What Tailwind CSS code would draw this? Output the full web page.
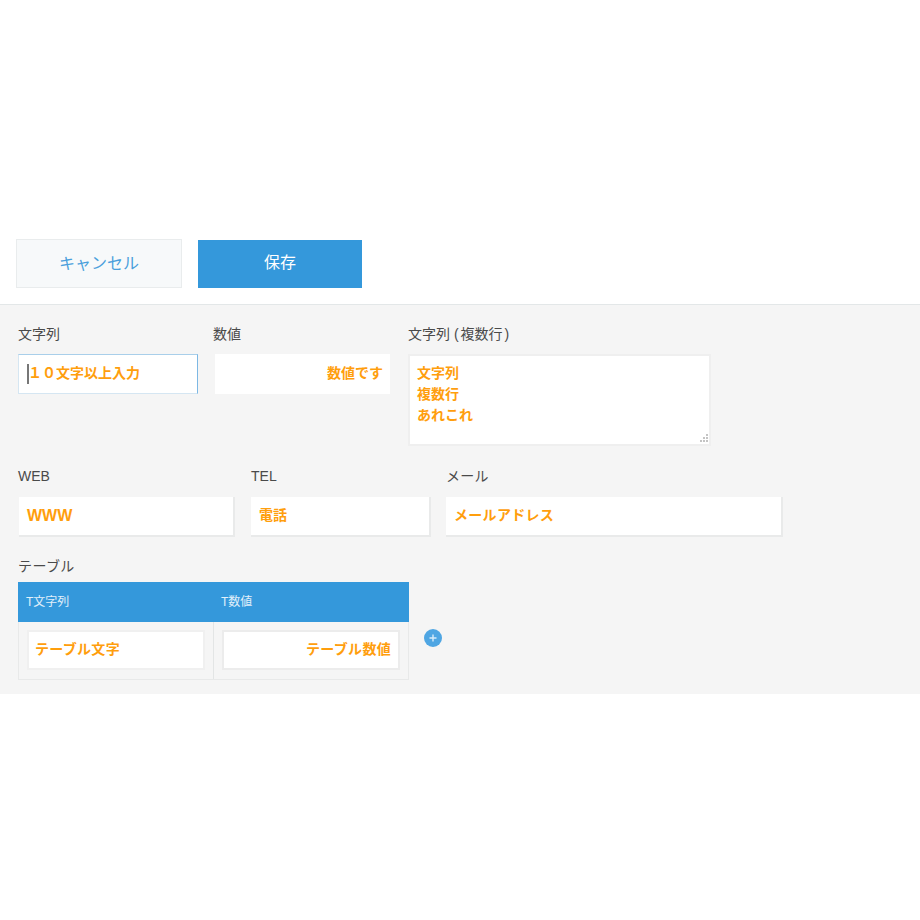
<!DOCTYPE html>
<html lang="ja">
<head>
  <meta charset="UTF-8" />
  <title>レコード編集</title>
  <script src="https://cdn.jsdelivr.net/npm/@tailwindcss/browser@4"></script>
</head>
<body class="bg-white font-['Liberation_Sans','Noto_Sans_CJK_JP',sans-serif] text-[14px] text-[#4a4a4a]">
  <!-- toolbar -->
  <div class="h-[305px] border-b border-[#e3e7e8] pt-[239px] pl-4 flex gap-4 items-start">
    <button class="w-[166px] h-[49px] bg-[#f7f9fa] border border-[#e9eced] text-[#4a9fdc] text-[16px]">キャンセル</button>
    <button class="w-[164px] h-[48px] pb-[3px] mt-px bg-[#3498db] text-white text-[16px]">保存</button>
  </div>

  <!-- form -->
  <div class="h-[389px] bg-[#f5f5f5] pl-[18px] pt-[19px]">
    <div class="flex items-start h-[142px]">
      <div class="w-[195px]">
        <div class="h-[20px] leading-[20px] mb-[10px]">文字列</div>
        <div class="w-[180px] h-[40px] pb-px bg-white border border-[#d5e6f2] border-r-[#7db8e4] border-t-[#a9cfea] pl-2 flex items-center font-bold text-[#ff9e0d]">
          <span class="w-[2px] h-[20px] mt-px bg-[#777] -mr-px"></span>
          <span>１０文字以上入力</span>
        </div>
      </div>
      <div class="w-[195px]">
        <div class="h-[20px] leading-[20px] mb-[10px]">数値</div>
        <div class="ml-[2px] w-[175px] h-[40px] pb-px bg-white pr-[7px] flex items-center justify-end font-bold text-[#ff9e0d]">数値です</div>
      </div>
      <div>
        <div class="h-[20px] leading-[20px] mb-[10px]">文字列 (<span class="mx-[2px]">複数行</span>)</div>
        <div class="relative w-[303px] h-[92px] bg-white border-2 border-[#efefef] pl-[7px] pt-[7px] font-bold text-[#ff9e0d] leading-[21px]">
          <div>文字列</div>
          <div>複数行</div>
          <div>あれこれ</div>
          <svg class="absolute right-0 bottom-0" width="12" height="12" viewBox="0 0 12 12" fill="#c4c4c4">
            <rect x="9" y="2" width="2" height="2" />
            <rect x="6" y="5" width="2" height="2" />
            <rect x="9" y="5" width="2" height="2" />
            <rect x="3" y="8" width="2" height="2" />
            <rect x="6" y="8" width="2" height="2" />
            <rect x="9" y="8" width="2" height="2" />
          </svg>
        </div>
      </div>
    </div>

    <div class="flex items-start h-[80px]">
      <div class="w-[233px]">
        <div class="h-[20px] leading-[20px] mb-[11px]">WEB</div>
        <div class="ml-px w-[216px] h-[40px] pb-px bg-white border-r-2 border-b-2 border-[#e9eaea] pl-2 flex items-center font-bold text-[16px] text-[#ff9e0d]">WWW</div>
      </div>
      <div class="w-[195px]">
        <div class="h-[20px] leading-[20px] mb-[11px]">TEL</div>
        <div class="w-[180px] h-[40px] pb-px bg-white border-r-2 border-b-2 border-[#e9eaea] pl-2 flex items-center font-bold text-[#ff9e0d]">電話</div>
      </div>
      <div>
        <div class="h-[20px] leading-[20px] mb-[11px] tracking-[0.3px]">メール</div>
        <div class="w-[337px] h-[40px] pb-px bg-white border-r-2 border-b-2 border-[#e9eaea] pl-2 flex items-center font-bold tracking-[0.3px] text-[#ff9e0d]">メールアドレス</div>
      </div>
    </div>

    <div class="h-[20px] leading-[20px] mt-[10px] mb-[6px] tracking-[0.4px]">テーブル</div>
    <div class="flex items-start">
      <div class="w-[391px]">
        <div class="h-[40px] bg-[#3498db] text-white/85 text-[12px] flex items-center">
          <div class="w-[195px] pl-2">T文字列</div>
          <div class="pl-[8px]">T数値</div>
        </div>
        <div class="flex h-[58px] border border-t-0 border-[#e8e9e9]">
          <div class="w-[195px] pl-[8px] pt-[8px] border-r border-[#e3e5e5]">
            <div class="w-[178px] h-[40px] pb-px bg-white border-2 border-[#f0f0f0] pl-[6px] flex items-center font-bold tracking-[0.3px] text-[#ff9e0d]">テーブル文字</div>
          </div>
          <div class="pl-[8px] pt-[8px]">
            <div class="w-[178px] h-[40px] pb-px bg-white border-2 border-[#ececec] pr-[7px] flex items-center justify-end font-bold tracking-[0.3px] text-[#ff9e0d]">テーブル数値</div>
          </div>
        </div>
      </div>
      <button class="ml-[15px] mt-[47px] w-[18px] h-[18px] rounded-full bg-[#4fa6e3] flex items-center justify-center">
        <svg width="8" height="8" viewBox="0 0 8 8" stroke="#d7ecfa" stroke-width="1.4"><path d="M4 0.5v7M0.5 4h7" /></svg>
      </button>
    </div>
  </div>
</body>
</html>
